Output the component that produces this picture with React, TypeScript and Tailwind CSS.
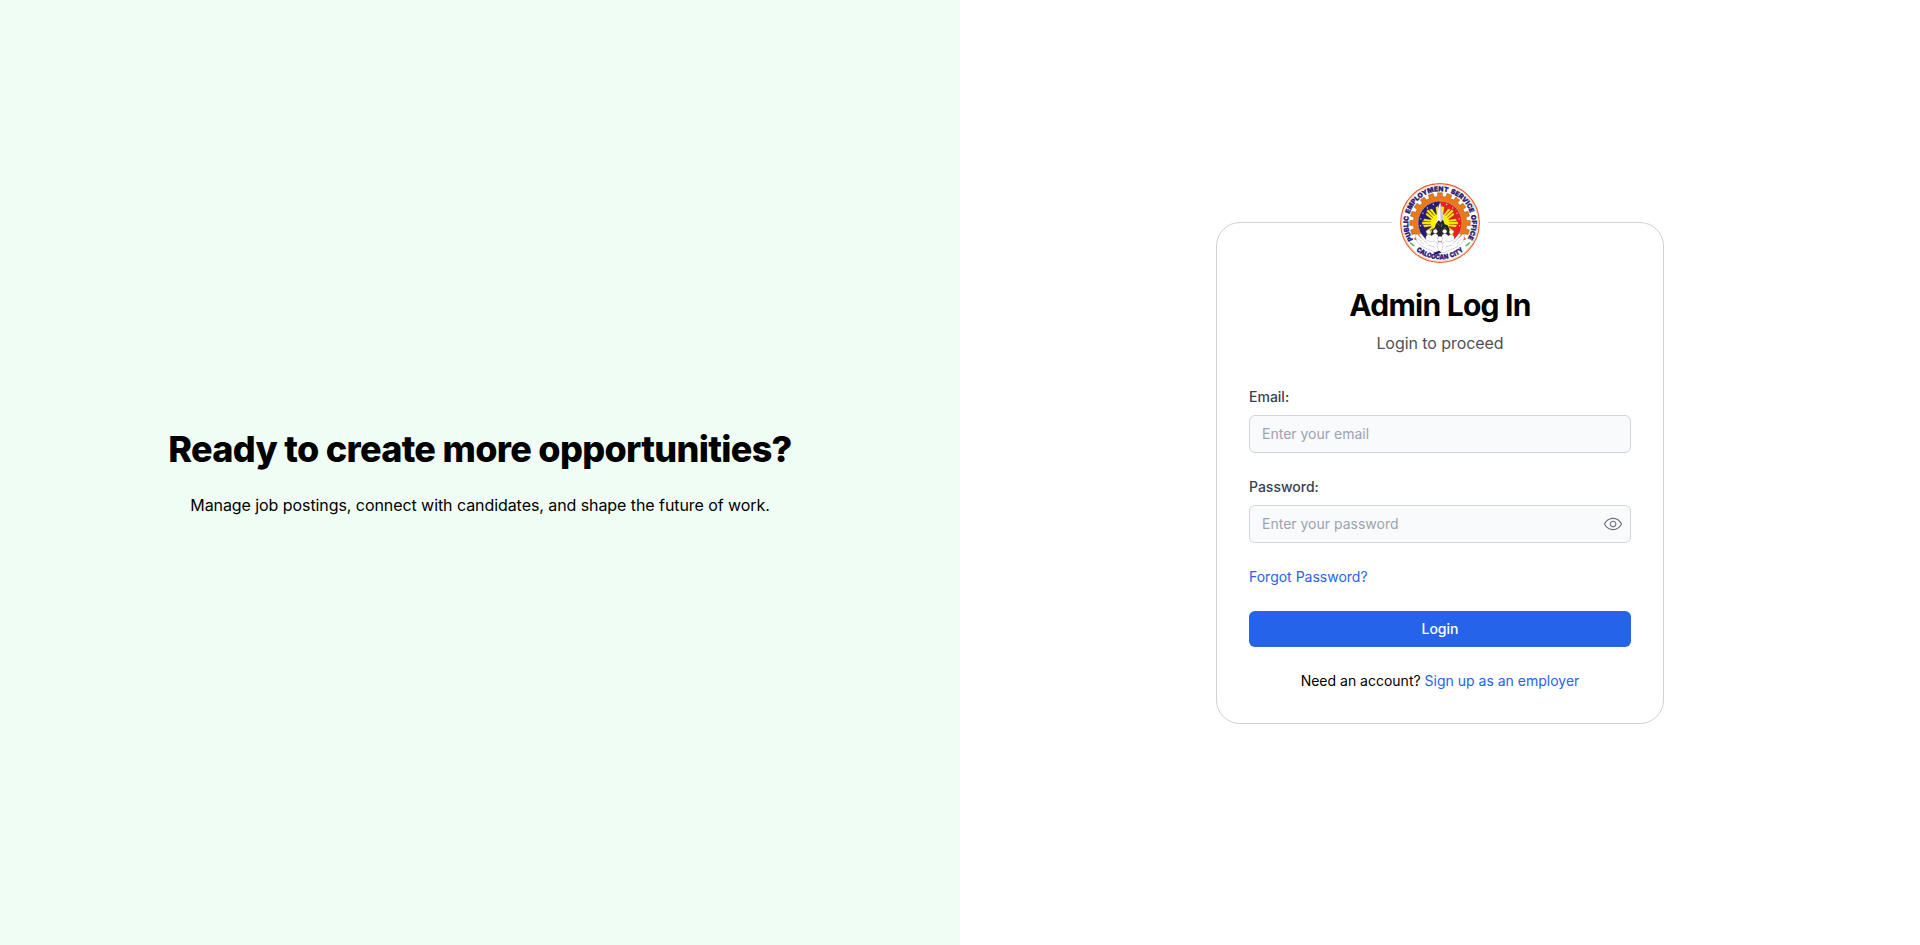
import { SlEye } from "react-icons/sl";

const polar = (r: number, deg: number) => {
  const a = ((deg - 90) * Math.PI) / 180;
  return `${(120 + r * Math.cos(a)).toFixed(2)} ${(120 + r * Math.sin(a)).toFixed(2)}`;
};

const gearPath = (() => {
  const teeth = 20;
  const step = 360 / teeth;
  const points: string[] = [];
  for (let i = 0; i < teeth; i++) {
    const c = i * step;
    points.push(polar(80, c - 5.6), polar(91, c - 4.6), polar(91, c + 4.6), polar(80, c + 5.6));
  }
  return `M${points.join("L")}Z`;
})();

const rays = [0, 45, 90, 135, 180, 225, 270, 315];

function Seal() {
  return (
    <svg viewBox="0 0 240 240" className="size-20" role="img" aria-label="Public Employment Service Office">
      <defs>
        <path id="seal-top" d={`M${polar(95, -122)}A95 95 0 1 1 ${polar(95, 122)}`} />
        <path id="seal-bottom" d={`M${polar(109, 221)}A109 109 0 0 0 ${polar(109, 139)}`} />
        <clipPath id="seal-core">
          <circle cx="120" cy="120" r="66" />
        </clipPath>
        <clipPath id="seal-gear">
          <path d="M0 0H240V160L190 172L120 186L50 172L0 160Z" />
        </clipPath>
      </defs>
      <circle cx="120" cy="120" r="118" fill="#fff" stroke="#e4602a" strokeWidth="3.5" />
      <circle cx="120" cy="120" r="114.5" fill="none" stroke="#f3b27c" strokeWidth="1.5" />
      <g clipPath="url(#seal-gear)">
        <path d={gearPath} fill="#e87917" stroke="#9c5a2c" strokeWidth="1.5" />
        <g clipPath="url(#seal-core)">
          <rect x="54" y="54" width="66" height="132" fill="#2b1a74" />
          <rect x="120" y="54" width="66" height="132" fill="#e32219" />
          {[262, 282, 300, 320, 340, 20, 40, 60, 78, 98].map((deg) => {
            const [x, y] = polar(59, deg).split(" ");
            return <circle key={deg} cx={x} cy={y} r="2" fill="#e9dff0" />;
          })}
          {rays.map((deg) => (
            <g key={deg} transform={`rotate(${deg} 120 120)`} fill="#fff200" stroke="#7a5a20" strokeWidth="0.8">
              <path d="M116.500 98L116.500 66L123.500 66L123.500 98Z" />
              <path d="M111 98L107 73L114 69L116.500 98Z" />
              <path d="M129 98L133 73L126 69L123.500 98Z" />
            </g>
          ))}
          <circle cx="120" cy="120" r="28" fill="#fff200" />
        </g>
        <circle cx="120" cy="120" r="66" fill="none" stroke="#b9a79d" strokeWidth="2" />
      </g>
      <path d="M120 58L114 78L108 124L132 124L126 78Z" fill="#f6f6f8" />
      <path d="M120 58L122 124L132 124L126 78Z" fill="#c9c9d2" />
      <path
        d="M108 122L116 112L122 118L129 110L134 124L143 127L148 138L152 164L90 164L96 140L104 134Z"
        fill="#24262b"
      />
      <path d="M112 120L118 128M126 122L124 132M138 132L132 138M104 140L110 136" stroke="#85898f" strokeWidth="2" />
      <g fill="#fff" stroke="#6f6f78" strokeWidth="0.8">
        <circle cx="86" cy="147" r="6.500" />
        <circle cx="106" cy="145" r="6.500" />
        <circle cx="134" cy="145" r="6.500" />
        <circle cx="154" cy="147" r="6.500" />
        <path d="M76 182L78 160Q86 150 94 158L98 156Q106 147 114 157L116 184Z" />
        <path d="M164 182L162 160Q154 150 146 158L142 156Q134 147 126 157L124 184Z" />
        <path d="M46 156L52 153L64 166L57 153L63 152L80 172L92 176L104 174L118 186L120 210L106 208L88 200L66 191L50 174Z" />
        <path d="M194 156L188 153L176 166L183 153L177 152L160 172L148 176L136 174L122 186L120 210L134 208L152 200L174 191L190 174Z" />
        <circle cx="120" cy="168" r="8" />
        <path d="M111 186Q112 176 120 176Q128 176 129 186L123 208L117 208Z" />
      </g>
      <path
        d="M54 166L70 183M62 164L82 181M84 186L104 192M186 166L170 183M178 164L158 181M156 186L136 192"
        stroke="#8c8c95"
        strokeWidth="1.2"
      />
      <path d="M28 176Q36 178 46 190Q34 190 28 176Z" fill="#55b457" />
      <path d="M212 176Q204 178 194 190Q206 190 212 176Z" fill="#55b457" />
      <path d="M100 209L118 203L124 209L106 215Z" fill="#2b1a74" />
      <g
        fill="#2b1a74"
        stroke="#2b1a74"
        strokeWidth="0.9"
        fontFamily="Inter, sans-serif"
        fontWeight="900"
        wordSpacing="3"
      >
        <text fontSize="20.500">
          <textPath href="#seal-top" textLength="400" lengthAdjust="spacingAndGlyphs">
            PUBLIC EMPLOYMENT SERVICE OFFICE
          </textPath>
        </text>
        <text fontSize="20">
          <textPath href="#seal-bottom" textLength="155" lengthAdjust="spacingAndGlyphs">
            CALOOCAN CITY
          </textPath>
        </text>
      </g>
    </svg>
  );
}

const inputClass =
  "block h-[38px] w-full rounded-md border border-[#d1d5db] bg-[#f9fafb] px-3 text-sm text-[#111827] outline-none placeholder:text-[#9ca3af]";

export default function App() {
  return (
    <div className="flex h-screen min-h-[945px] bg-white font-['Inter',sans-serif] text-black">
      <section className="flex w-1/2 flex-col items-center justify-center bg-[#f0fdf4] text-center">
        <h1 className="text-4xl leading-10 font-extrabold tracking-[-0.69px]">Ready to create more opportunities?</h1>
        <p className="mt-6 text-base tracking-[-0.07px]">
          Manage job postings, connect with candidates, and shape the future of work.
        </p>
      </section>

      <main className="flex w-1/2 items-center justify-center">
        <div className="relative w-full max-w-md rounded-3xl border border-[#d1d1d1] bg-white p-8">
          <div className="absolute -top-10 left-1/2 -translate-x-1/2 bg-white px-2">
            <Seal />
          </div>
          <header className="mt-8 text-center">
            <h2 className="text-3xl font-bold tracking-tight">Admin Log In</h2>
            <p className="mt-2 text-base tracking-[-0.06px] text-[#525252]">Login to proceed</p>
          </header>
          <form className="mt-8 flex flex-col gap-6" onSubmit={(e) => e.preventDefault()}>
            <div className="flex flex-col gap-2">
              <label htmlFor="email" className="text-sm font-medium text-[#374151]">
                Email:
              </label>
              <input id="email" type="email" placeholder="Enter your email" className={inputClass} />
            </div>
            <div className="flex flex-col gap-2">
              <label htmlFor="password" className="text-sm font-medium text-[#374151]">
                Password:
              </label>
              <div className="relative">
                <input id="password" type="password" placeholder="Enter your password" className={inputClass} />
                <button
                  type="button"
                  aria-label="Show password"
                  className="absolute inset-y-0 right-0 flex items-center pr-[9px] text-[#6b7280]"
                >
                  <SlEye size={18} />
                </button>
              </div>
            </div>
            <a href="#" className="self-start text-sm text-[#2563eb]">
              Forgot Password?
            </a>
            <button type="submit" className="h-9 rounded-md bg-[#2563eb] text-sm font-medium text-white">
              Login
            </button>
            <p className="text-center text-sm">
              Need an account?{" "}
              <a href="#" className="text-[#2563eb]">
                Sign up as an employer
              </a>
            </p>
          </form>
        </div>
      </main>
    </div>
  );
}
